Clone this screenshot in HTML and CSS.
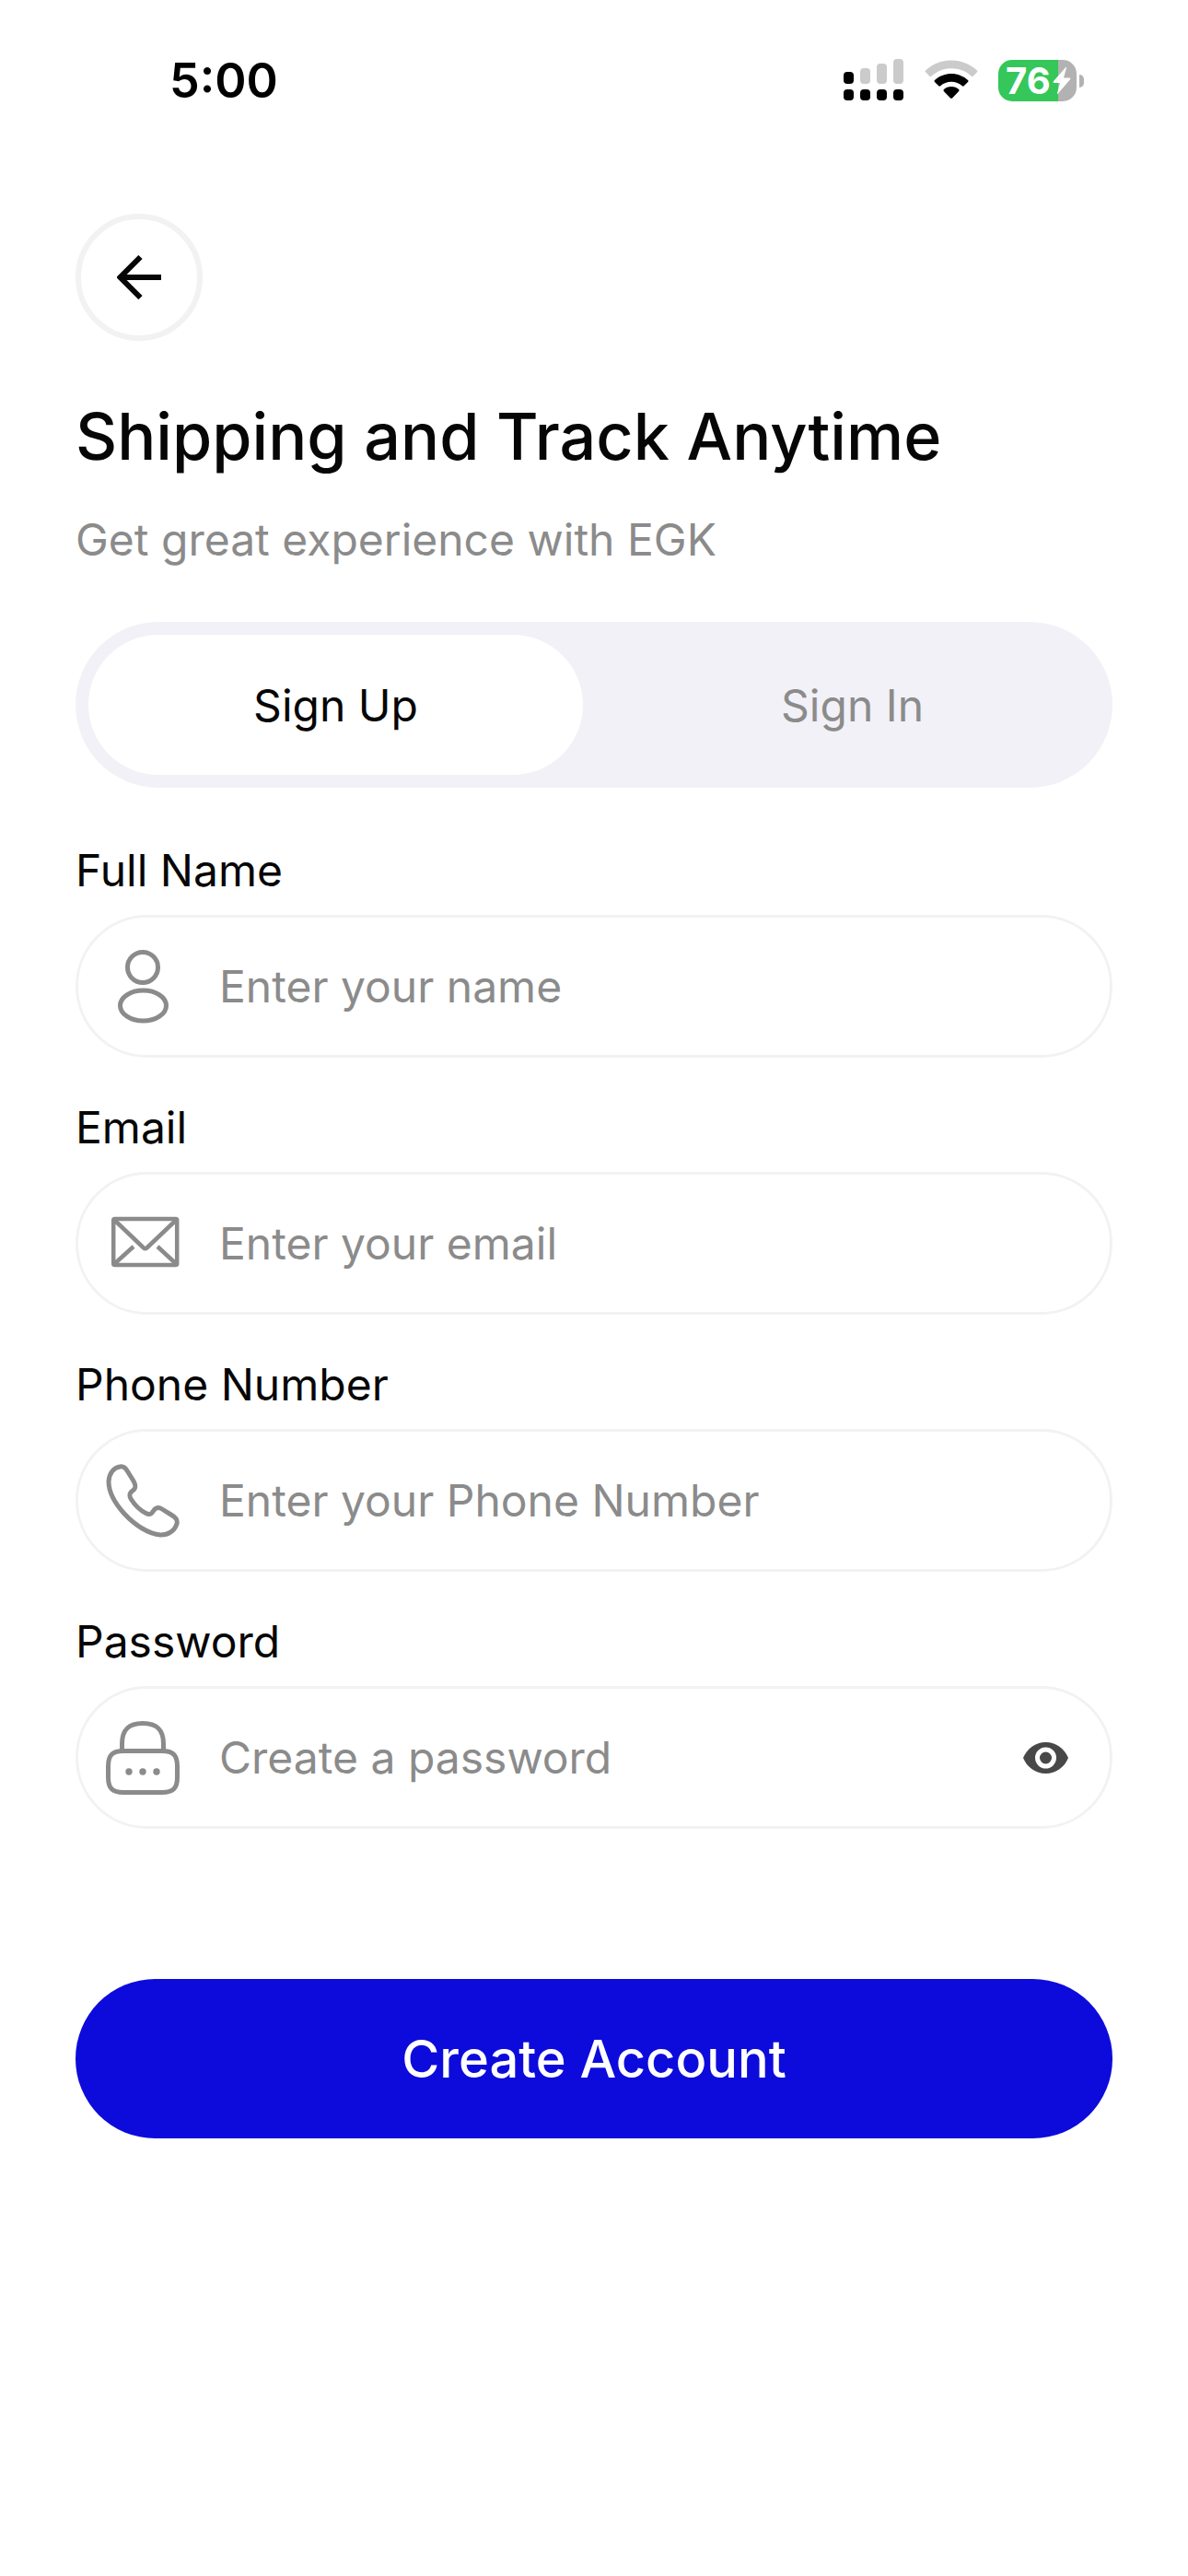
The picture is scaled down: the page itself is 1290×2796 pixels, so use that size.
FILE: index.html
```html
<!DOCTYPE html>
<html lang="en">
<head>
<meta charset="utf-8">
<meta name="viewport" content="width=device-width, initial-scale=1">
<title>Sign Up</title>
<link rel="stylesheet" href="styles.css">
</head>
<body>
<header class="status">
  <time class="status-time">5:00</time>
  <div class="status-icons">
    <svg width="66" height="46" viewBox="0 0 66 46" aria-hidden="true">
      <g fill="#cbcbcb">
        <rect x="18" y="10" width="11" height="17" rx="4"/>
        <rect x="36" y="5" width="11" height="22" rx="4"/>
        <rect x="54" y="0" width="11" height="27" rx="4"/>
      </g>
      <rect x="0" y="14" width="11" height="13" rx="4"/>
      <rect x="0" y="33" width="11" height="12" rx="4"/>
      <rect x="18" y="33" width="11" height="12" rx="4"/>
      <rect x="36" y="33" width="11" height="12" rx="4"/>
      <rect x="54" y="33" width="11" height="12" rx="4"/>
    </svg>
    <svg width="58" height="46" viewBox="0 0 58 46" aria-hidden="true">
      <path fill="#cbcbcb" d="M29 1.5C40 1.500 49.500 5.700 57 12.500Q57.800 13.400 57 14.300L52.600 18.700Q51.800 19.500 50.800 18.700C45 13.300 37.500 10.300 29 10.300S13 13.300 7.200 18.700Q6.200 19.500 5.400 18.700L1 14.300Q.2 13.400 1 12.500C8.500 5.700 18 1.500 29 1.500Z"/>
      <path d="M29 16C36 16 42.300 18.700 47 23Q48 24 47 25L42.700 29.300Q41.800 30 40.800 29.200C37.600 26.400 33.500 24.700 29 24.700S20.400 26.400 17.200 29.200Q16.200 30 15.300 29.300L11 25Q10 24 11 23C15.700 18.700 22 16 29 16Z"/>
      <path d="M29 30C32.300 30 35 31.300 37.100 33.100Q38 34 37.200 34.900L30 42.400Q29 43.300 28 42.400L20.800 34.900Q20 34 20.900 33.100C23 31.300 25.700 30 29 30Z"/>
    </svg>
    <div class="battery">
      <span class="battery-level">76</span>
      <svg class="battery-bolt" width="20" height="31" viewBox="0 0 20 31" aria-hidden="true"><path fill="#fff" d="M14.500.8Q15.300.5 15 1.500L12 12.600H18.500Q20 12.900 19 14.200L5.700 29.700Q4.600 30.500 5 29L8 18H1.400Q0 17.600.9 16.300Z"/></svg>
    </div>
  </div>
</header>
<main class="page">
  <button class="back" type="button" aria-label="Back">
    <svg width="48" height="48" viewBox="0 0 48 48" fill="none" stroke="#060606" stroke-width="6" aria-hidden="true"><path d="M48 24H5M25.500 2L3.500 24L25.500 46"/></svg>
  </button>
  <h1 class="title">Shipping and Track Anytime</h1>
  <p class="subtitle">Get great experience with EGK</p>
  <div class="tabs" role="tablist">
    <button class="tab tab-active" type="button" role="tab" aria-selected="true">Sign Up</button>
    <button class="tab" type="button" role="tab" aria-selected="false">Sign In</button>
  </div>
  <form class="form">
    <div class="field">
      <label class="label" for="name">Full Name</label>
      <div class="control">
        <svg class="icon" viewBox="0 0 80 80" aria-hidden="true"><circle cx="40" cy="19" r="16.500"/><ellipse cx="40.500" cy="60.500" rx="25" ry="16.500"/></svg>
        <input class="input" id="name" type="text" placeholder="Enter your name">
      </div>
    </div>
    <div class="field">
      <label class="label" for="email">Email</label>
      <div class="control">
        <svg class="icon" viewBox="0 0 80 80" stroke-linejoin="round" aria-hidden="true"><rect x="8.200" y="13" width="69" height="50" rx="1.500" stroke-width="4.500"/><path stroke-width="4.500" d="M9 14L41 44.500Q42.700 46 44.400 44.500L76.500 14M9 62L30 43M56 43L76.500 62"/></svg>
        <input class="input" id="email" type="email" placeholder="Enter your email">
      </div>
    </div>
    <div class="field">
      <label class="label" for="phone">Phone Number</label>
      <div class="control">
        <svg class="icon" viewBox="0 0 80 80" stroke-linejoin="round" aria-hidden="true"><path d="M15 3C19 2 21.500 4.500 23.500 8L30 18.500C33 24 32.500 26.500 29 29C25 32 25 34.500 27.500 38.500C32 45.500 37.500 50.500 43.500 53.500C47.500 55.500 49.500 54.500 51.500 51C53.500 47.500 57 46.500 61 49L71.500 55.500C76.500 58.500 78 61 77 65C74.500 73 67 77.500 59 77C47 76 32 67 20 54C10 43 3 31 3 19C3.500 10 8.500 4 15 3Z"/></svg>
        <input class="input" id="phone" type="tel" placeholder="Enter your Phone Number">
      </div>
    </div>
    <div class="field">
      <label class="label" for="password">Password</label>
      <div class="control">
        <svg class="icon" viewBox="0 0 80 80" aria-hidden="true"><path d="M17.500 32V25C17.500 9 25 2.500 40 2.500S62.500 9 62.500 25V32"/><path d="M19 32.500H61C73 32.500 77.500 37 77.500 49V61C77.500 73 73 77.500 61 77.500H19C7 77.500 2.500 73 2.500 61V49C2.500 37 7 32.500 19 32.500Z"/><g fill="#8b8b8b" stroke="none"><circle cx="25" cy="55" r="3.700"/><circle cx="40" cy="55" r="3.700"/><circle cx="55" cy="55" r="3.700"/></g></svg>
        <input class="input" id="password" type="password" placeholder="Create a password">
        <button class="reveal" type="button" aria-label="Show password">
          <svg width="49" height="34" viewBox="0 0 49 34" aria-hidden="true"><path fill="#484848" d="M24.500 0C35.500 0 45 7 49 17C45 27 35.500 34 24.500 34S4 27 0 17C4 7 13.500 0 24.500 0Z"/><circle cx="24.500" cy="17" r="9" fill="#484848" stroke="#fff" stroke-width="5"/></svg>
        </button>
      </div>
    </div>
    <button class="submit" type="submit">Create Account</button>
  </form>
</main>
</body>
</html>
```
FILE: styles.css
```css
* {
  box-sizing: border-box;
}

body {
  margin: 0;
  background: #fff;
  color: #060606;
  font-family: Inter, "Noto Sans", sans-serif;
  font-size: 48px;
}

button,
input {
  margin: 0;
  padding: 0;
  border: 0;
  background: none;
  color: inherit;
  font: inherit;
}

svg {
  display: block;
  flex: none;
}

.status {
  display: flex;
  align-items: center;
  justify-content: space-between;
  height: 174px;
  padding: 0 112px 0 184px;
}

.status-time {
  color: #000;
  font-size: 52px;
  font-weight: 600;
}

.status-icons {
  display: flex;
  align-items: center;
  gap: 22px;
}

.battery {
  position: relative;
  display: flex;
  align-items: center;
  width: 85px;
  height: 45px;
  margin-right: 9px;
  padding-left: 8px;
  border-radius: 15px;
  background: linear-gradient(90deg, #35c759 65px, #b2b2b2 65px);
}

.battery::after {
  content: "";
  position: absolute;
  left: 88px;
  top: 16px;
  width: 5px;
  height: 14px;
  border-radius: 0 6px 6px 0;
  background: #b2b2b2;
}

.battery-level {
  width: 51px;
  color: #fff;
  font-size: 40px;
  font-weight: 700;
  line-height: 45px;
}

.page {
  padding: 58px 82px;
}

.back {
  display: flex;
  align-items: center;
  justify-content: center;
  width: 138px;
  height: 138px;
  border: 6px solid #f2f2f2;
  border-radius: 50%;
}

.title {
  margin: 62px 0 0;
  font-size: 70px;
  font-weight: 500;
  line-height: 84px;
}

.subtitle {
  margin: 40px 0 0;
  color: #8b8b8b;
  line-height: 60px;
}

.tabs {
  display: grid;
  grid-template-columns: 1fr 1fr;
  gap: 24px;
  margin-top: 59px;
  padding: 14px;
  border-radius: 90px;
  background: #f2f1f7;
}

.tab {
  height: 152px;
  border-radius: 76px;
  color: #8b8b8b;
}

.tab-active {
  background: #fff;
  color: #060606;
}

.form {
  display: flex;
  flex-direction: column;
  gap: 46px;
  margin-top: 60px;
}

.field {
  display: flex;
  flex-direction: column;
  gap: 18px;
}

.label {
  line-height: 60px;
}

.control {
  display: flex;
  align-items: center;
  height: 155px;
  padding: 0 45px 0 30px;
  border: 3px solid #f2f2f2;
  border-radius: 78px;
}

.icon {
  width: 80px;
  height: 80px;
  fill: none;
  stroke: #8b8b8b;
  stroke-width: 5;
}

.input {
  flex: 1;
  min-width: 0;
  height: 100%;
  margin-left: 43px;
  outline: 0;
}

.input::placeholder {
  color: #8b8b8b;
  opacity: 1;
}

.submit {
  height: 173px;
  margin-top: 117px;
  border-radius: 87px;
  background: #0d0bdb;
  color: #fff;
  font-size: 56px;
  font-weight: 500;
}
```
